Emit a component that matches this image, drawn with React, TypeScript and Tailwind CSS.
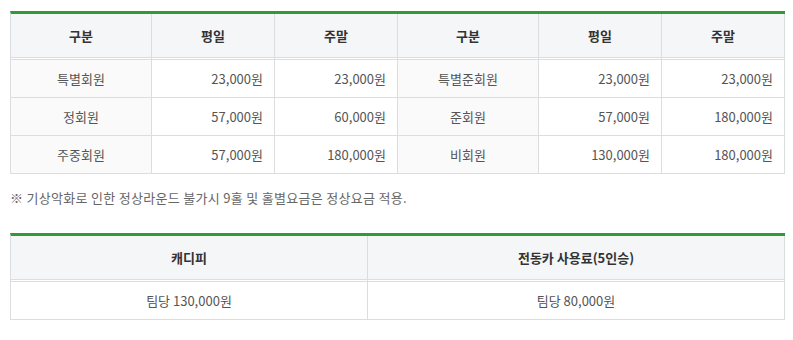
const rows = [
  ['특별회원', '23,000원', '23,000원', '특별준회원', '23,000원', '23,000원'],
  ['정회원', '57,000원', '60,000원', '준회원', '57,000원', '180,000원'],
  ['주중회원', '57,000원', '180,000원', '비회원', '130,000원', '180,000원'],
];

const heads = ['구분', '평일', '주말', '구분', '평일', '주말'];

export default function App() {
  return (
    <div
      className="w-[793px] h-[340px] bg-white px-[10px] pt-[11px] text-[13px] text-[#555]"
      style={{ fontFamily: '"Noto Sans CJK KR", "Noto Sans", sans-serif' }}
    >
      {/* 요금표 */}
      <div className="w-[775px] border-t-[3px] border-l border-t-[#2f9b36] border-l-[#dcdde1]">
        <div className="grid grid-cols-[141px_123px_123px_141px_123px_123px]">
          {heads.map((h, i) => (
            <div
              key={i}
              className="h-[46px] flex items-center justify-center bg-[#f5f6f8] bg-clip-padding border-r border-b-[3px] border-double border-[#dcdde1] font-bold text-[#333]"
            >
              {h}
            </div>
          ))}
          {rows.map((r, ri) =>
            r.map((c, ci) => {
              const label = ci === 0 || ci === 3;
              return (
                <div
                  key={`${ri}-${ci}`}
                  className={`h-[38px] flex items-center border-r border-b border-[#dcdde1] ${
                    label ? 'justify-center bg-[#fafafa]' : 'justify-end pr-[11px]'
                  }`}
                >
                  {c}
                </div>
              );
            })
          )}
        </div>
      </div>

      <p className="mt-[14px] leading-[20px] tracking-[0.3px] text-[#666]">
        ※ 기상악화로 인한 정상라운드 불가시 9홀 및 홀별요금은 정상요금 적용.
      </p>

      {/* 캐디피 / 카트 */}
      <div className="mt-[25px] w-[775px] border-t-[3px] border-l border-t-[#2f9b36] border-l-[#dcdde1]">
        <div className="grid grid-cols-[357px_417px]">
          {['캐디피', '전동카 사용료(5인승)'].map((h) => (
            <div
              key={h}
              className="h-[46px] flex items-center justify-center bg-[#f5f6f8] bg-clip-padding border-r border-b-[3px] border-double border-[#dcdde1] font-bold text-[#333]"
            >
              {h}
            </div>
          ))}
          {['팀당 130,000원', '팀당 80,000원'].map((c) => (
            <div key={c} className="h-[38px] flex items-center justify-center border-r border-b border-[#dcdde1]">
              {c}
            </div>
          ))}
        </div>
      </div>
    </div>
  );
}
